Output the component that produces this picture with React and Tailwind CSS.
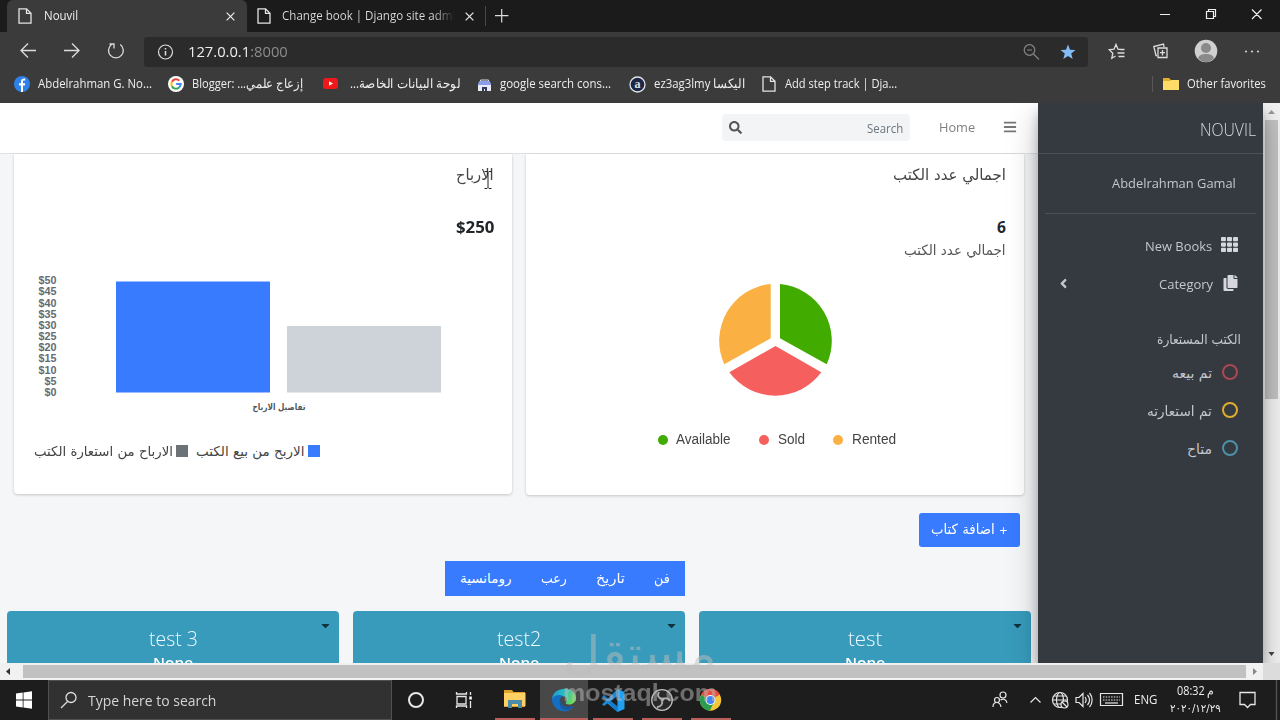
import React, { useLayoutEffect, useRef } from "react";
import { FaSearch, FaBars, FaTh, FaCopy, FaAngleLeft, FaCaretDown } from "react-icons/fa";

const segoe = "font-['Open_Sans','Noto_Sans',sans-serif]";
const arabic = "font-['DejaVu_Sans',sans-serif]";

/* One line of text condensed or widened to the width of its box. */
function Fit({ className = "", inner = "", dir = "ltr", children }) {
  const box = useRef(null);
  const line = useRef(null);
  useLayoutEffect(() => {
    const natural = line.current.offsetWidth;
    if (natural) line.current.style.transform = `scaleX(${box.current.clientWidth / natural})`;
  }, []);
  return (
    <div ref={box} dir="ltr" className={`shrink-0 whitespace-nowrap ${className}`}>
      <span ref={line} dir={dir} className={`inline-block origin-left ${inner}`}>{children}</span>
    </div>
  );
}

function PageIcon({ className = "" }) {
  return (
    <svg className={`h-4 w-[14px] shrink-0 ${className}`} viewBox="0 0 14 16" fill="none" stroke="#e4e4e4" strokeWidth="1.3">
      <path d="M1 .8h7.6L13 5.2v10H1zM8.5.8v4.6H13" />
    </svg>
  );
}

function Cross({ className = "", size = "size-[9px]" }) {
  return (
    <svg className={`shrink-0 ${size} ${className}`} viewBox="0 0 10 10" stroke="#e8e8e8" strokeWidth="1.4">
      <path d="M.7.7l8.6 8.6M9.3.7L.7 9.3" />
    </svg>
  );
}

function TabStrip() {
  return (
    <div className="flex h-8 items-stretch bg-[#1b1b1b] pl-[7px]">
      <div className="flex w-60 items-center rounded-t-md bg-[#3b3b3b] pl-[11px]">
        <PageIcon />
        <Fit className="ml-3 w-[34px] text-[12.500px] font-medium text-[#eee]">Nouvil</Fit>
        <Cross className="ml-[148px]" />
      </div>
      <div className="flex w-[238px] items-center pl-[10px]">
        <PageIcon />
        <Fit className="ml-[11px] w-[173px] text-[12.500px] font-medium" inner="bg-linear-to-r from-[#ddd] from-88% to-[#1b1b1b] bg-clip-text text-transparent">Change book | Django site admi</Fit>
        <Cross className="ml-[10px]" />
      </div>
      <div className="my-1.5 w-px bg-[#4a4a4a]" />
      <svg className="ml-2 h-8 w-4" viewBox="0 0 16 32" stroke="#ddd" strokeWidth="1.2"><path d="M1 15.7h13.4M7.7 9v13.4" /></svg>
      <div className="flex-1" />
      <svg className="h-8 w-[126px]" viewBox="0 0 126 32" fill="none" stroke="#eee" strokeWidth="1.2">
        <path d="M6 14.5h10M52.5 11.500h7v7h-7zM54.5 11V9.500h7v7h-2M98 9.500l9.500 9.500M107.500 9.500L98 19" />
      </svg>
    </div>
  );
}

function Toolbar() {
  return (
    <div className="flex h-9 items-center">
      <svg className="h-9 w-36 shrink-0" viewBox="0 0 144 36" fill="none" stroke="#ddd" strokeWidth="1.3">
        <path d="M36 18.500H21M28 11.500l-7 7 7 7M64 18.500h15M72 11.500l7 7-7 7" />
        <path d="M111.500 12.500a7.400 7.400 0 1 0 8.800 0M109.500 12h4.500v4.500" />
      </svg>
      <div className="mt-1 flex h-[30px] w-[944px] items-center rounded-[3px] bg-[#2b2b2b] pl-[13px]">
        <svg className="size-[17px]" viewBox="0 0 17 17" fill="none" stroke="#ddd" strokeWidth="1.2">
          <circle cx="8.500" cy="8" r="7" /><path d="M8.500 7v4.500M8.500 4v1.500" strokeWidth="1.500" />
        </svg>
        <Fit className="ml-3.5 w-[100px] text-[14px] leading-5 font-medium text-[#eee]">127.0.0.1<span className="font-normal text-[#8c8c8c]">:8000</span></Fit>
        <div className="flex-1" />
        <svg className="size-[17px]" viewBox="0 0 17 17" fill="none" stroke="#858585" strokeWidth="1.200">
          <circle cx="6.500" cy="6" r="5.300" /><path d="M4 6h5M10.500 10l5.500 5.500" />
        </svg>
        <svg className="mr-3 ml-5 size-4" viewBox="0 0 16 16" fill="#83bdf5">
          <path d="M8 .5l2 5.300 5.500.300-4.300 3.500 1.500 5.500L8 12l-4.700 3.100 1.500-5.500L.5 6.100 6 5.800z" />
        </svg>
      </div>
      <svg className="mt-1 h-8 w-48" viewBox="0 0 192 32" fill="none" stroke="#ddd" strokeWidth="1.300">
        <path d="M33 13.500l-3-.300-2-4.700-2 4.700-4.700.500 3.500 3.500-1 5 3.700-2.200M31.500 13.500h5M29.500 17h7M30.500 20.500h6" />
        <path d="M70 12h9v9.500h-9zM74.500 14v5.500M72 16.700h5M69 19.500h-1l-2.200-9L75.500 8l.5 3" />
        <circle cx="118" cy="15" r="11.300" fill="#d0d0d0" stroke="none" />
        <circle cx="118" cy="12" r="5" fill="#8a8a8a" stroke="none" />
        <path d="M110 22c1.500-5.500 14.500-5.500 16 0-4 5.500-12 5.500-16 0z" fill="#8a8a8a" stroke="none" />
        <g fill="#ddd" stroke="none"><circle cx="158" cy="15.500" r="1" /><circle cx="164" cy="15.500" r="1" /><circle cx="170" cy="15.500" r="1" /></g>
      </svg>
    </div>
  );
}

const bookmarkText = "text-[12.500px] leading-5 font-medium text-[#eee]";

function Bookmarks() {
  return (
    <div className="flex h-[35px] items-center pb-[3px] pl-3.5">
      <svg className="size-4" viewBox="0 0 16 16"><circle cx="8" cy="8" r="8" fill="#2f80e8" /><path d="M7 16V9.500H5V7.200h2V5.500c0-2 1.200-3 3-3h1.200v2H10c-.8 0-1 .4-1 1v1.700h2.200L10.800 9.500H9V16z" fill="#fff" /></svg>
      <Fit className={`ml-2 w-[114px] ${bookmarkText}`}>Abdelrahman G. No...</Fit>
      <svg className="ml-4 size-4" viewBox="0 0 16 16" fill="none" strokeWidth="2">
        <circle cx="8" cy="8" r="8" fill="#fff" stroke="none" />
        <path d="M3.900 5.800A4.700 4.700 0 0 1 11.300 4.600" stroke="#e94335" /><path d="M3.900 5.800a4.700 4.700 0 0 0 0 4.400" stroke="#fbbc05" />
        <path d="M3.900 10.200a4.700 4.700 0 0 0 7.200 1.400" stroke="#34a853" /><path d="M11.100 11.600A4.700 4.700 0 0 0 12.700 8H8.200" stroke="#4285f4" />
      </svg>
      <Fit className={`ml-2 w-[111px] ${bookmarkText}`}>Blogger: ...إزعاج علمي</Fit>
      <svg className="ml-[20px] h-3 w-4" viewBox="0 0 16 12"><rect width="15" height="11" rx="3" fill="#f01818" /><path d="M6 3.200v4.600l4-2.300z" fill="#fff" /></svg>
      <Fit dir="rtl" className={`ml-[11px] w-[110px] ${bookmarkText}`}>لوحة البيانات الخاصة...</Fit>
      <svg className="ml-[17px] size-[15px]" viewBox="0 0 15 15">
        <path d="M3.500 4V3h8v1" fill="none" stroke="#ddd" /><path d="M1 6.500L2.500 4h10L14 6.500V9H1z" fill="#8a9eea" /><path d="M1 8h13v6H1z" fill="#e8eaf5" /><path d="M5 10h5v4H8v-2H7v2H5z" fill="#333b5d" />
      </svg>
      <Fit className={`ml-2 w-[111px] ${bookmarkText}`}>google search cons...</Fit>
      <svg className="ml-[18px] size-[17px]" viewBox="0 0 17 17"><circle cx="8.500" cy="8.500" r="7.500" fill="#1b2744" stroke="#dfe3ea" strokeWidth="1.300" /><text x="8.500" y="12" textAnchor="middle" fontFamily="Liberation Serif" fontWeight="bold" fontSize="12" fill="#dfe3ea">a</text></svg>
      <Fit className={`ml-2 w-[91px] ${bookmarkText}`}>ez3ag3lmy اليكسا</Fit>
      <PageIcon className="ml-[17px]" />
      <Fit className={`ml-[9px] w-[112px] ${bookmarkText}`}>Add step track | Dja...</Fit>
      <div className="flex-1" />
      <div className="h-4 w-px bg-[#575757]" />
      <svg className="ml-2.5 h-3 w-4" viewBox="0 0 16 12"><path d="M0 0h6l2 2h8v10H0z" fill="#e5ae28" /><path d="M0 3h7l1.500-1H16v10H0z" fill="#ffdc68" /></svg>
      <Fit className={`mr-3.5 ml-2 w-[79px] ${bookmarkText}`}>Other favorites</Fit>
    </div>
  );
}

function Navbar() {
  return (
    <div className="flex h-[51px] items-center border-b border-[#dee2e6] bg-white pb-0.5 pl-[722px]">
      <div className="flex h-[27px] w-[188px] items-center rounded-sm bg-[#f2f4f6] pl-[7px]">
        <FaSearch className="size-[13px] text-[#555]" />
        <Fit className="mt-0.5 ml-[125px] w-[36px] text-[13px] leading-5 text-[#6c757d]">Search</Fit>
      </div>
      <Fit className="ml-[29px] w-9 text-[13.500px] leading-5 text-[#808080]">Home</Fit>
      <FaBars className="ml-7 size-3.5 text-[#777]" />
    </div>
  );
}

const ticks = ["$50", "$45", "$40", "$35", "$30", "$25", "$20", "$15", "$10", "$5", "$0"];

function ProfitCard() {
  return (
    <section className="relative flex h-[340px] w-[498px] flex-col items-end rounded-b bg-white pr-[18px] shadow-[0_1px_3px_rgba(0,0,0,.2)]">
      <Fit dir="rtl" className={`mt-[9px] w-[38px] text-[15.500px] leading-6 text-[#444] ${arabic}`}>الارباح</Fit>
      <Fit className="mt-[28px] w-[38px] text-[15.500px] leading-6 font-bold text-[#212529]">$250</Fit>
      <svg className="mt-[25px] -mr-[18px] h-[156px] w-[498px]" viewBox="14 264 498 156" fontFamily="Liberation Sans" fontWeight="bold">
        {ticks.map((t, i) => (
          <text key={t} x="56.500" y={284.200 + i * 11.170} textAnchor="end" fontSize="10.500" fill="#666b70" textLength={t.length === 3 ? 18 : 12} lengthAdjust="spacingAndGlyphs">{t}</text>
        ))}
        <path d="M116 281.500h154v111H116z" fill="#387bff" />
        <path d="M287 326h154v66.500H287z" fill="#ced2d9" />
        <text x="279" y="409.500" direction="rtl" textAnchor="middle" fontFamily="DejaVu Sans" fontSize="9" fill="#50565b" textLength="53" lengthAdjust="spacingAndGlyphs">تفاصيل الارباح</text>
      </svg>
      <div className={`mt-[19px] mr-[173px] flex h-6 items-center text-[13.500px] leading-6 text-[#444] ${arabic}`}>
        <Fit dir="rtl" className="w-[139px]">الارباح من استعارة الكتب</Fit>
        <span className="ml-[3px] size-3 bg-[#6c7278]" />
        <Fit dir="rtl" className="ml-2 w-[109px]">الاربح من بيع الكتب</Fit>
        <span className="mr-px ml-[3px] size-3 bg-[#387bff]" />
      </div>
      <svg className="absolute top-4 left-[470px] h-5 w-2" viewBox="0 0 8 20" fill="none" stroke="#222"><path d="M.5 1.500h2.500l1 1 1-1h2.500M4 2.500v15M.5 18.500H3l1-1 1 1h2.500" /></svg>
    </section>
  );
}

function BooksCard() {
  return (
    <section className="flex h-[341px] w-[498px] flex-col items-end rounded-b bg-white pr-[18px] shadow-[0_1px_3px_rgba(0,0,0,.2)]">
      <Fit dir="rtl" className={`mt-[9px] w-[113px] text-[15.500px] leading-6 text-[#444] ${arabic}`}>اجمالي عدد الكتب</Fit>
      <Fit className="mt-[28px] w-[9px] text-[15.500px] leading-6 font-bold text-[#212529]">6</Fit>
      <Fit dir="rtl" className={`-mt-px w-[102px] text-[14px] leading-6 text-[#555] ${arabic}`}>اجمالي عدد الكتب</Fit>
      <svg className="mt-5 mr-[171px] h-[118px] w-[118px]" viewBox="717 282 118 118">
        <path d="M780 284A57 57 0 0 1 826.700 364.300L780 338.300z" fill="#41ab00" />
        <path d="M821.300 372.300A57 57 0 0 1 729.300 372.300L775.500 346z" fill="#f55f5e" />
        <path d="M724.300 364.300A57 57 0 0 1 770.700 284V338.300z" fill="#fab042" />
      </svg>
      <div className="mt-[27px] mr-[110px] flex h-6 items-center font-['Liberation_Sans'] text-[14px] leading-6 text-[#444]">
        <span className="mt-0.5 size-2.5 rounded-full bg-[#41ab00]" />
        <Fit className="ml-2 w-[55px]">Available</Fit>
        <span className="mt-0.5 ml-7 size-2.5 rounded-full bg-[#f55f5e]" />
        <Fit className="ml-[9px] w-[27px]">Sold</Fit>
        <span className="mt-0.5 ml-7 size-2.5 rounded-full bg-[#fab042]" />
        <Fit className="ml-[9px] w-11">Rented</Fit>
      </div>
    </section>
  );
}

function BookTile({ children, fit, none = "w-10" }) {
  return (
    <article className="flex h-[70px] w-[332px] shrink-0 flex-col items-center rounded-t bg-[#389bbb] pt-3">
      <Fit className={`text-[21px] leading-[30px] font-light text-[#eefaff] ${fit}`}>{children}</Fit>
      <Fit className={`text-[15px] leading-[19px] font-semibold text-white ${none}`}>None</Fit>
      <FaCaretDown className="-mt-[53px] mr-[7px] size-[13px] self-end text-[#10333f]" />
    </article>
  );
}

function Main() {
  return (
    <main className="h-[560px] w-[1038px] shrink-0 overflow-hidden bg-[#f4f6f8]">
      <Navbar />
      <div className="flex h-[359px] gap-3.5 pl-3.5"><ProfitCard /><BooksCard /></div>
      <div className="flex h-12 justify-end pr-[18px]">
        <button className={`flex h-[34px] w-[101px] items-center justify-center rounded-[3px] bg-[#387bff] text-[14px] leading-6 text-white ${arabic}`}>
          <Fit dir="rtl" className="w-[77px]"><span className="text-[11px]">+</span> اضافة كتاب</Fit>
        </button>
      </div>
      <div className="flex h-[50px] pl-[445px]">
        <nav className={`flex h-[35px] w-60 items-center bg-[#387bff] pb-px pl-[15px] text-[13.500px] leading-6 text-white ${arabic}`}>
          <Fit dir="rtl" className="w-[52px]">رومانسية</Fit>
          <Fit dir="rtl" className="ml-[29px] w-[26px]">رعب</Fit>
          <Fit dir="rtl" className="ml-[29px] w-[29px]">تاريخ</Fit>
          <Fit dir="rtl" className="ml-[29px] w-4">فن</Fit>
        </nav>
      </div>
      <div className="flex gap-3.5 pl-[7px]">
        <BookTile fit="w-[49px]">test 3</BookTile><BookTile fit="w-[44px]">test2</BookTile><BookTile fit="w-[34px]">test</BookTile>
      </div>
    </main>
  );
}

function Status({ ring, fit, children }) {
  return (
    <div className="flex h-[38px] items-center justify-end pr-[25px]">
      <Fit dir="rtl" className={`text-[14px] leading-6 text-[#c2c7d0] ${arabic} ${fit}`}>{children}</Fit>
      <span className={`mb-0.5 ml-2.5 size-4 rounded-full border-2 ${ring}`} />
    </div>
  );
}

function Sidebar() {
  return (
    <aside className="relative h-[560px] w-[225px] shrink-0 bg-[#353940] text-[#c2c7d0] shadow-[0_14px_28px_rgba(0,0,0,.25),0_10px_10px_rgba(0,0,0,.22)]">
      <div className="flex h-[51px] items-center justify-end border-b border-[#4b5158] pr-[7px]">
        <Fit className="mt-0.5 w-[56px] text-[17.500px] leading-6 font-light text-[#d8dbe0]">NOUVIL</Fit>
      </div>
      <div className="mr-[7px] ml-[7px] flex h-[60px] items-center justify-end border-b border-[#4b5158] pr-5 pb-px">
        <Fit className="w-[124px] text-[13.500px] leading-6">Abdelrahman Gamal</Fit>
      </div>
      <div className="mt-[11px] flex h-[39px] items-center justify-end pr-[25px]">
        <Fit className="mt-0.5 w-[67px] text-[13.500px] leading-6 font-medium">New Books</Fit>
        <FaTh className="ml-[9px] size-[17px] text-[#d5d6e0]" />
      </div>
      <div className="flex h-[38px] items-center pr-[25px] pl-[18px]">
        <FaAngleLeft className="size-[15px]" />
        <Fit className="mt-0.5 ml-[88px] w-[54px] text-[13.500px] leading-6 font-medium">Category</Fit>
        <FaCopy className="ml-2.5 h-4 w-[15px] text-[#d5d6e0]" />
      </div>
      <div className={`mt-[23px] mb-[5px] flex h-7 items-center justify-end pr-[22px] text-[13.500px] leading-6 ${arabic}`}>
        <Fit dir="rtl" className="w-[84px]">الكتب المستعارة</Fit>
      </div>
      <div className="-mt-1">
        <Status ring="border-[#ad4653]" fit="w-10">تم بيعه</Status>
        <Status ring="border-[#dfad2d]" fit="w-[65px]">تم استعارته</Status>
        <Status ring="border-[#4a91a8]" fit="w-[25px]">متاح</Status>
      </div>
    </aside>
  );
}

function VScroll() {
  return (
    <div className="flex h-[560px] w-[17px] shrink-0 flex-col items-center bg-[#f1f1f1]">
      <svg className="h-[17px] w-[17px]" viewBox="0 0 17 17"><path d="M5 11l3.500-4 3.500 4z" fill="#999" /></svg>
      <div className="h-[279px] w-[13px] bg-[#c1c1c1]" />
      <div className="flex-1" />
      <svg className="h-[17px] w-[17px]" viewBox="0 0 17 17"><path d="M5.500 6l3 4 3-4z" fill="#444" /></svg>
    </div>
  );
}

function HScroll() {
  return (
    <div className="flex h-[17px] items-center bg-[#f1f1f1]">
      <svg className="h-[17px] w-[23px]" viewBox="0 0 23 17"><path d="M10 5v7L6 8.500z" fill="#333" /></svg>
      <div className="h-[13px] w-[1223px] bg-[#c1c1c1]" />
      <svg className="h-[17px] w-[17px]" viewBox="0 0 17 17"><path d="M7 5v7l4-3.500z" fill="#888" /></svg>
      <div className="h-[17px] w-[17px] bg-[#dcdcdc]" />
    </div>
  );
}

function AppButton({ className = "", line = "w-10", children }) {
  return (
    <div className={`flex h-10 w-12 shrink-0 flex-col items-center ${className}`}>
      <svg className="h-[38px] w-8" viewBox="0 0 32 38">{children}</svg>
      <div className={`h-0.5 bg-[#b9605c] ${line}`} />
    </div>
  );
}

function Taskbar() {
  return (
    <footer className="flex h-10 items-center bg-[#1d1d1d]">
      <svg className="h-10 w-12" viewBox="0 0 48 40" fill="#fff"><path d="M16 13.500l6.700-1v7H16zM23.500 12.400l8.500-1.200v8.300h-8.500zM16 20.500h6.700v7l-6.700-1zM23.500 20.500H32v8.300l-8.500-1.200z" /></svg>
      <div className="flex h-10 w-[344px] items-center border border-[#505050] bg-[#313131] pl-[11px]">
        <svg className="size-[18px]" viewBox="0 0 18 18" fill="none" stroke="#ddd" strokeWidth="1.300"><circle cx="11" cy="6.500" r="5" /><path d="M7.500 10.500L1 17" /></svg>
        <Fit className="mt-px ml-2.5 w-[128px] text-[14.500px] leading-6 text-[#d4d4d4]">Type here to search</Fit>
      </div>
      <svg className="h-10 w-[98px]" viewBox="0 0 98 40" fill="none" stroke="#e6e6e6">
        <circle cx="24" cy="20" r="7" strokeWidth="2" />
        <path d="M65 16.500h9v7.500h-9zM64.500 12v2h10v-2M64.500 28v-2h10v2M78.500 12v3M78.500 21v7" strokeWidth="1.300" /><path d="M77.300 16.500h2.500v3h-2.500z" fill="#fff" stroke="none" />
      </svg>
      <AppButton className="mr-px ml-px">
        <path d="M5 10h8l1.500 2H26v15H5z" fill="#dfa22a" /><path d="M5 13h21.500v13H5z" fill="#ffd164" /><path d="M9 20h14v8h-4v-4h-6v4H9z" fill="#4b8da8" />
      </AppButton>
      <AppButton className="bg-[#484848]" line="w-12">
        <defs><linearGradient id="edgeTop" x2="1" y2=".3"><stop stopColor="#1b93dc" /><stop offset=".6" stopColor="#2cc3ba" /><stop offset="1" stopColor="#6cdb58" /></linearGradient></defs>
        <path d="M4 19C5 6 27 5 28 18c0 4-3 6.500-7 6.500-3 0-4-1-3-2.500 2-3 0-6-4-6-4 0-8 1-10 3z" fill="url(#edgeTop)" />
        <path d="M4 19c2-4 8-5 11-3-4 1-5 10 1 12 3 1 7 0 10-2-4 7-14 7-19 1-2-2-3-5-3-8z" fill="#126fc4" />
        <path d="M12.500 20c0 5 5 8.500 13.500 6-3 4-8 5-11 3.500-3-1.500-4-6-2.500-9.500z" fill="#185ba4" />
      </AppButton>
      <AppButton className="ml-px mr-px">
        <path d="M20.500 9l7 3v17l-7 3-11-9.500 2.500-2 8.500 6z" fill="#229ff1" /><path d="M5 16.500l2-1.500 14 12-.5 5z" fill="#147bc8" /><path d="M5 24.500L20.500 9v7L7 26z" fill="#1e8ad6" />
      </AppButton>
      <AppButton line="w-10">
        <circle cx="16" cy="20" r="10.300" fill="#292929" stroke="#bdbdbd" strokeWidth="1.300" />
        <g fill="none" stroke="#aaa" strokeWidth="2"><path d="M16 19c-4-1-5-4-3-7M16 20c3-3 6-2 8 1M16 20c1 4-1 7-5 7" /></g>
      </AppButton>
      <AppButton className="ml-px">
        <circle cx="15.500" cy="20" r="10.700" fill="#f5c638" /><path d="M15.500 20L6.200 14.500A10.700 10.700 0 0 1 24.800 14.500z" fill="#e84c3d" /><path d="M6.200 14.700A10.700 10.700 0 0 0 14.800 30.700L19 22z" fill="#2a9d50" /><path d="M6.200 14.500A10.700 10.700 0 0 1 24.800 14.500H15z" fill="#e84c3d" />
        <circle cx="15.500" cy="20" r="5" fill="#fff" /><circle cx="15.500" cy="20" r="4" fill="#4285f4" />
      </AppButton>
      <div className="flex-1" />
      <svg className="h-10 w-[144px]" viewBox="985 0 144 40" fill="none" stroke="#e6e6e6" strokeWidth="1.200">
        <circle cx="1003" cy="15" r="3" /><circle cx="997" cy="20" r="2.500" /><path d="M993 27c0-6 7-6 8 0M1000.500 20c3-2 6-.5 6.500 3M1030.500 22.500l5-5 5 5" />
        <circle cx="1060" cy="20" r="7.500" /><ellipse cx="1060" cy="20" rx="3.500" ry="7.500" /><path d="M1052.500 20h15M1054 16h12M1054 24h12" /><circle cx="1064.500" cy="24.500" r="3.500" fill="#1d1d1d" /><path d="M1062 22l5 5" />
        <path d="M1076 17.500h3l4-4v13l-4-4h-3zM1085 17c1.500 2 1.500 4 0 6M1087.500 15c2.500 3 2.500 7 0 10M1089.500 13c3.500 4 3.500 10 0 14" />
        <path d="M1100.500 13.500h22v12h-22z" /><path d="M1103 17h17M1103 20h17" strokeDasharray="1.500 1.200" /><path d="M1105 23h13" />
      </svg>
      <Fit className="ml-[5px] w-[23px] text-[12.500px] leading-5 font-medium text-[#eee]">ENG</Fit>
      <div className="ml-3 flex w-[53px] flex-col items-center text-[#eee]">
        <Fit className={`-mt-0.5 w-[37px] text-[12px] leading-[18px] font-medium ${segoe}`}><bdi>08:32</bdi> م</Fit>
        <Fit className={`w-[51px] text-[11px] leading-[17px] ${arabic}`}><bdo dir="ltr">٢٠٢٠/١٢/٢٩</bdo></Fit>
      </div>
      <svg className="ml-[15px] h-10 w-[43px]" viewBox="0 0 43 40" fill="none" stroke="#e6e6e6" strokeWidth="1.300"><path d="M3 12.500h15v12h-4.500L10.500 27.500l-3-3H3z" /><path d="M39.500 0v40" stroke="#555" /></svg>
    </footer>
  );
}

export default function App() {
  return (
    <div className={`relative flex h-[720px] w-[1280px] flex-col overflow-hidden bg-[#3b3b3b] ${segoe}`}>
      <TabStrip />
      <Toolbar />
      <Bookmarks />
      <div className="flex h-[560px] overflow-hidden"><Main /><Sidebar /><VScroll /></div>
      <HScroll />
      <Taskbar />
      <div className="pointer-events-none absolute top-[628px] left-[563px] w-[154px] text-[#bdbdbd]/50">
        <Fit dir="rtl" className={`h-[51px] w-[154px] text-[46px] leading-[50px] ${arabic}`}>مستقل</Fit>
        <Fit className="h-7 w-[154px] font-['Liberation_Sans'] text-[23px] leading-7 font-bold">mostaql.com</Fit>
      </div>
    </div>
  );
}
